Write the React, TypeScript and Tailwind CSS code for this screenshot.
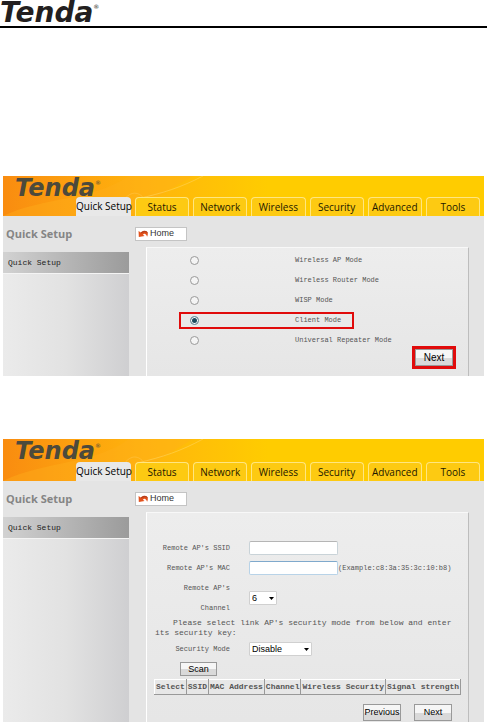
import { useState } from 'react'
import type { ReactNode } from 'react'

const tabs = ['Quick Setup', 'Status', 'Network', 'Wireless', 'Security', 'Advanced', 'Tools']
const modes = ['Wireless AP Mode', 'Wireless Router Mode', 'WISP Mode', 'Client Mode', 'Universal Repeater Mode']
const columns = ['Select', 'SSID', 'MAC Address', 'Channel', 'Wireless Security', 'Signal strength']

const mono = "font-['Liberation_Mono',monospace] text-[#555]"
const buttonClasses = "border border-[#999] bg-linear-to-b from-[#f6f6f6] from-50% to-[#d9d9d9] to-50% text-center font-['Liberation_Sans',sans-serif] text-black "
const inputClasses = "h-[14px] w-[89px] rounded-[2px] border bg-white px-1 font-['Liberation_Sans',sans-serif] text-[9px] outline-none "

const Logo = ({ className }: { className: string }) => (
  <span className={"flex items-start font-['DejaVu_Sans',sans-serif] font-bold italic " + className}>
    Tenda
    <span className="mt-1 text-[6px] leading-[6px] font-normal not-italic">®</span>
  </span>
)

const HomeArrow = () => (
  <svg viewBox="0 0 12 10" className="h-[9px] w-[11px]" aria-hidden="true">
    <path d="M0.5 2.2 L0.8 9 L7.2 7.8 L5.4 6.3 C6.6 4.9 8.4 4.4 10 8.6 C12.6 3.6 8.6 0.2 3 3.9 Z" fill="#e2521d" />
    <path d="M3 3.9 C6.6 0.4 10.6 1.6 11 5.2 C9 3 6.5 3 3.8 5 Z" fill="#b8401c" />
  </svg>
)

const Swoosh = () => (
  <svg viewBox="0 0 250 42" preserveAspectRatio="none" className="absolute top-0 left-0 h-full w-[250px]" aria-hidden="true">
    <path d="M0 42 C40 22 90 26 126 0 L190 0 C160 18 140 30 128 42 Z" fill="#ffb01c" opacity="0.4" />
    <path d="M112 42 C124 10 140 10 150 42" fill="none" stroke="#ffc54a" strokeWidth="0.8" opacity="0.7" />
    <path d="M134 24 C160 18 178 12 200 0" fill="none" stroke="#ffd560" strokeWidth="0.8" opacity="0.7" />
  </svg>
)

const Panel = ({ children, headerClass }: { children: ReactNode; headerClass: string }) => (
  <section className="mx-[3px] bg-[#e4e4e4]">
    <header className={"relative flex items-end bg-linear-to-r from-[#f98c10] via-[#ffb50c] via-30% to-[#ffcc00] to-55% " + headerClass}>
      <Swoosh />
      <div className="absolute top-0 left-3">
        <Logo className="text-[24px] leading-[24px] text-[#4c4a3c]" />
      </div>
      <nav className="relative flex flex-1 gap-1 pr-1 pl-[73px] font-['Open_Sans',sans-serif] text-[10px] leading-[19px] text-[#1c1800]">
        {tabs.map((tab, index) => (
          <a
            key={tab}
            href="#"
            className={
              'h-[19px] rounded-t-[4px] text-center whitespace-nowrap ' +
              (index === 0 ? 'w-[55px] bg-[#e8e8e8] text-black' : 'flex-1 border border-b-0 border-[#ffe680] bg-[#fdca12]')
            }
          >
            {tab}
          </a>
        ))}
      </nav>
    </header>
    <div className="flex">
      <aside className="flex w-[126px] flex-col">
        <h2 className="h-9 pl-[3px] font-['Open_Sans',sans-serif] text-[11px] leading-9 font-bold text-[#858585]">Quick Setup</h2>
        <a href="#" className={'h-[21px] bg-linear-to-r from-[#d2d2d2] to-[#9b9b9b] pl-[5px] text-[8px] leading-[21px] ' + mono}>
          <span className="text-[#222]">Quick Setup</span>
        </a>
        <div className="flex-1 border-t border-[#f4f4f4] bg-linear-to-r from-[#ebebeb] via-[#e2e2e2] to-[#cfcfd1]" />
      </aside>
      <div className="flex-1 pr-[15px] pl-[6px]">
        <div className="flex h-[31px] items-center">
          <button className="mt-1 flex h-[14px] w-[52px] items-center gap-px border border-[#c4c4c4] bg-white pl-[2px] font-['Liberation_Sans',sans-serif] text-[9px] leading-none text-[#333]">
            <HomeArrow />
            Home
          </button>
        </div>
        <div className="ml-[11px] border-t border-r border-l border-t-[#f8f8f8] border-r-[#bdbdbd] border-l-white bg-linear-to-b from-[#ededed] to-[#e6e6e6]">
          {children}
        </div>
      </div>
    </div>
  </section>
)

const ModePanel = () => {
  const [mode, setMode] = useState('Client Mode')
  return (
    <Panel headerClass="h-10">
      <div className="pt-[2px] pb-[7px]">
        {modes.map((name) => (
          <div key={name} className="flex h-5 items-center pl-8">
            <label
              className={
                'flex h-[17px] w-[175px] items-center border-2 pl-[9px] text-[7px] whitespace-nowrap ' + mono +
                (mode === name ? ' border-[#e00b0b]' : ' border-transparent')
              }
            >
              <span className="flex w-[105px] shrink-0">
                <input
                  type="radio"
                  name="mode"
                  checked={mode === name}
                  onChange={() => setMode(name)}
                  className="h-[9px] w-[9px] appearance-none rounded-full border border-[#999] bg-[#f4f4f4] checked:border-[#7d9aa6] checked:bg-[#1c4a5e] checked:ring-1 checked:ring-white checked:ring-inset"
                />
              </span>
              {name}
            </label>
          </div>
        ))}
        <div className="flex justify-end pr-3">
          <div className="-mt-[4px] border-[3px] border-[#e00b0b] bg-white">
            <button className={buttonClasses + 'block h-[17px] w-[38px] text-[10px] leading-[15px]'}>Next</button>
          </div>
        </div>
      </div>
    </Panel>
  )
}

const Dropdown = ({ id, options, width }: { id: string; options: string[]; width: string }) => (
  <div className={'relative ' + width}>
    <select
      id={id}
      className="block h-[14px] w-full appearance-none rounded-[1px] border border-[#d0d0d0] bg-white pl-[2px] font-['Liberation_Sans',sans-serif] text-[9px] leading-[12px] text-black"
    >
      {options.map((option) => <option key={option}>{option}</option>)}
    </select>
    <svg viewBox="0 0 5 3" className="pointer-events-none absolute top-[6px] right-[3px] h-[3px] w-[5px]" aria-hidden="true">
      <path d="M0 0 H5 L2.5 3 Z" fill="#000" />
    </svg>
  </div>
)

const labelClasses = 'w-[83px] shrink-0 text-right '

const ClientPanel = () => (
  <Panel headerClass="h-[42px]">
    <form className={'pt-[25px] pb-px text-[7px] ' + mono} onSubmit={(e) => e.preventDefault()}>
      <div className="flex h-5 items-center gap-[19px]">
        <label htmlFor="ssid" className={labelClasses}>Remote AP's SSID</label>
        <input id="ssid" className={inputClasses + 'border-[#c9d3d8] border-t-[#b5b5b5]'} />
      </div>
      <div className="flex h-5 items-center">
        <label htmlFor="mac" className={labelClasses + 'mr-[19px]'}>Remote AP's MAC</label>
        <input id="mac" className={inputClasses + 'border-[#b8d3e8] border-t-[#7fa9cc]'} />
        <span className="whitespace-nowrap">(Example:c8:3a:35:3c:10:b8)</span>
      </div>
      <div className="flex h-10 items-center gap-[19px]">
        <label htmlFor="channel" className={labelClasses + 'leading-5'}>Remote AP's<br />Channel</label>
        <Dropdown id="channel" options={['6', '1', '11']} width="w-[28px]" />
      </div>
      <p className="pl-2 indent-[18px] text-[8px] leading-[10px]">
        Please select link AP's security mode from below and enter its security key:
      </p>
      <div className="mt-px flex h-5 items-center gap-[19px]">
        <label htmlFor="security" className={labelClasses}>Security Mode</label>
        <Dropdown id="security" options={['Disable', 'WEP', 'WPA-PSK', 'WPA2-PSK']} width="w-[63px]" />
      </div>
      <button className={buttonClasses + 'mt-[3px] ml-[33px] block h-[14px] w-[37px] text-[9px] leading-[12px]'}>Scan</button>
      <table className="mt-[3px] ml-[7px] border-collapse border border-t-white border-r-[#999] border-b-[#999] border-l-white text-[8px] leading-[14px]">
        <thead>
          <tr>
            {columns.map((column) => (
              <th key={column} className="border-r border-[#999] px-px font-bold whitespace-nowrap">{column}</th>
            ))}
          </tr>
        </thead>
      </table>
      <div className="mt-[9px] flex justify-end gap-[13px] pr-4">
        <button className={buttonClasses + 'h-[17px] w-[38px] text-[9px] leading-[15px] whitespace-nowrap'}>Previous</button>
        <button className={buttonClasses + 'h-[17px] w-[38px] text-[9px] leading-[15px]'}>Next</button>
      </div>
    </form>
  </Panel>
)

const App = () => {
  return (
    <main className="bg-white">
      <div className="h-7 border-b-2 border-black">
        <Logo className="text-[28px] leading-[26px] text-[#231f20]" />
      </div>
      <div className="mt-[148px] flex flex-col gap-[63px]">
        <ModePanel />
        <ClientPanel />
      </div>
    </main>
  )
}

export default App
